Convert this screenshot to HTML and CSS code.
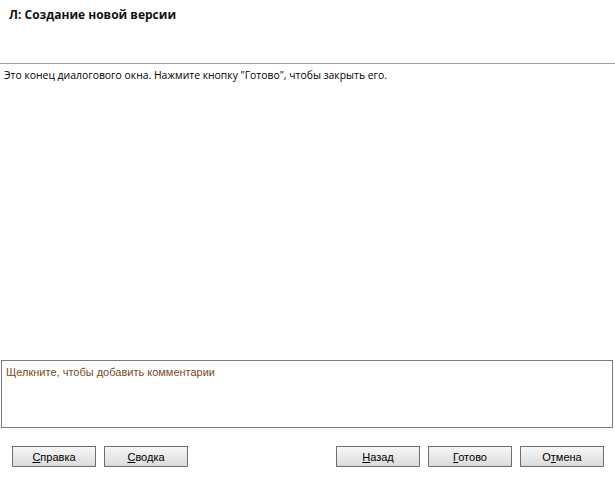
FILE: index.html
```html
<!DOCTYPE html>
<html lang="ru">
<head>
  <meta charset="UTF-8">
  <title>Создание новой версии</title>
  <link rel="stylesheet" href="styles.css">
</head>
<body>
  <div class="dialog">
    <div class="dialog-header">
      <h1>Л: Создание новой версии</h1>
    </div>
    <div class="dialog-body">
      <p>Это конец диалогового окна. Нажмите кнопку "Готово", чтобы закрыть его.</p>
    </div>
    <div class="comments">Щелкните, чтобы добавить комментарии</div>
    <div class="button-bar">
      <div class="button-group">
        <button class="btn"><u>С</u>правка</button>
        <button class="btn"><u>С</u>водка</button>
      </div>
      <div class="button-group">
        <button class="btn"><u>Н</u>азад</button>
        <button class="btn"><u>Г</u>отово</button>
        <button class="btn">О<u>т</u>мена</button>
      </div>
    </div>
  </div>
</body>
</html>
```

FILE: styles.css
```css
body {
  margin: 0;
  background: #fff;
  font-family: 'Open Sans', 'Noto Sans', sans-serif;
}
.dialog {
  display: flex;
  flex-direction: column;
  height: 479px;
}
.dialog-header {
  height: 64px;
  border-bottom: 1px solid #a0a0a0;
  padding: 6px 9px 0 9px;
  box-sizing: border-box;
}
.dialog-header h1 {
  margin: 0;
  font-size: 12px;
  font-weight: 700;
  color: #111;
}
.dialog-body {
  flex: 1;
  padding: 4px 4px 0 4px;
}
.dialog-body p {
  margin: 0;
  font-size: 10.4px;
  color: #000;
}
.comments {
  height: 68px;
  box-sizing: border-box;
  margin: 0 2px 0 1px;
  border: 1px solid #7a7a7a;
  padding: 5px 4px;
  font-family: 'Liberation Sans', Arial, sans-serif;
  font-size: 11px;
  color: #7a4a1c;
}
.button-bar {
  display: flex;
  justify-content: space-between;
  padding: 18px 11px 12px 12px;
}
.button-group {
  display: flex;
  gap: 8px;
}
.btn {
  width: 84px;
  height: 21px;
  padding: 0;
  border: 1px solid #6e6e6e;
  background: linear-gradient(#f6f6f6, #dcdcdc);
  font-family: 'Liberation Sans', Arial, sans-serif;
  font-size: 11px;
  color: #000;
}
```
